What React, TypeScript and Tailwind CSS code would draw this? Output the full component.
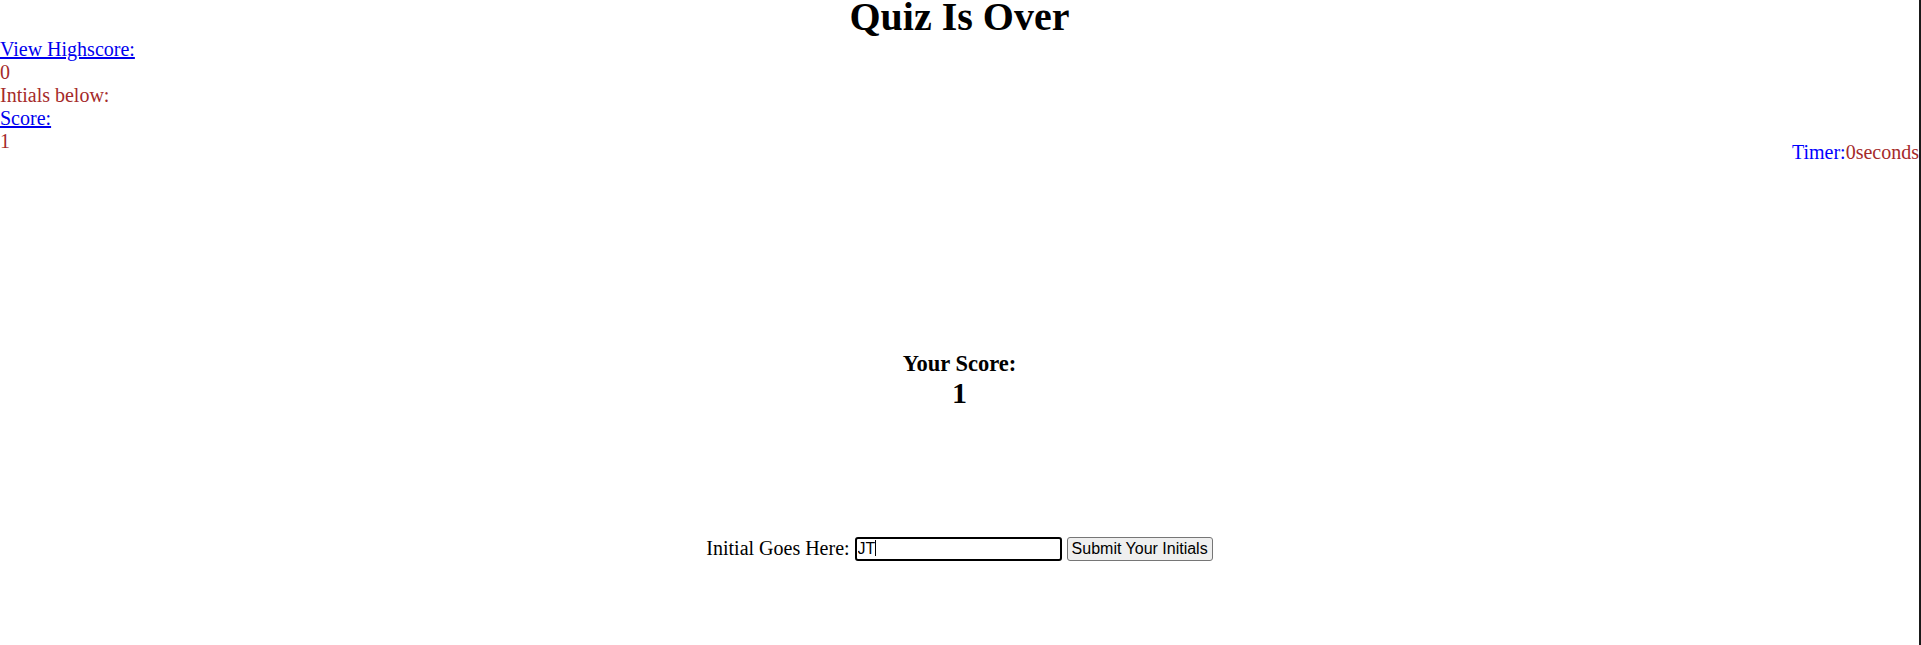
import React from "react";

export default function App() {
  const serif = { fontFamily: '"Liberation Serif", "Times New Roman", serif' };
  return (
    <div
      className="w-full h-[645px] bg-white border-r-2 border-[#1a1a1a] text-[20px] leading-[23px] text-black overflow-hidden"
      style={serif}
    >
      <h1 className="text-center text-[40px] leading-[34px] pb-[4px] font-bold">Quiz Is Over</h1>
      <div className="flex justify-between">
        <div className="flex flex-col">
          <a href="#" className="text-[#0000ee] underline self-start">View Highscore:</a>
          <span className="text-[#a52a2a]">0</span>
          <span className="text-[#a52a2a]">Intials below:</span>
          <a href="#" className="text-[#0000ee] underline self-start">Score:</a>
          <span className="text-[#a52a2a]">1</span>
        </div>
        <div className="mt-[103px]">
          <span className="text-[#0000ff]">Timer:</span>
          <span className="text-[#a52a2a]">0seconds</span>
        </div>
      </div>
      <div className="mt-[187px] flex flex-col items-center">
        <h3 className="text-[22.5px] leading-[25px] font-bold">Your Score:</h3>
        <h2 className="text-[30px] leading-[34px] font-bold">1</h2>
      </div>
      <div className="mt-[126px] flex items-center justify-center gap-[5px]">
        <span>Initial Goes Here:</span>
        <div className="relative">
          <input
            defaultValue="JT"
            className="w-[207px] h-[24px] border-2 border-black rounded-[3px] px-[1px] text-[16px] outline-none"
            style={{ fontFamily: '"Liberation Sans", Arial, sans-serif' }}
          />
          <span className="absolute left-[20px] top-[4px] w-[1.5px] h-[16px] bg-black" />
        </div>
        <button
          className="h-[24px] px-[4px] bg-[#efefef] border border-[#767676] rounded-[3px] text-[16px] leading-[18px] text-black"
          style={{ fontFamily: '"Liberation Sans", Arial, sans-serif' }}
        >
          Submit Your Initials
        </button>
      </div>
    </div>
  );
}
